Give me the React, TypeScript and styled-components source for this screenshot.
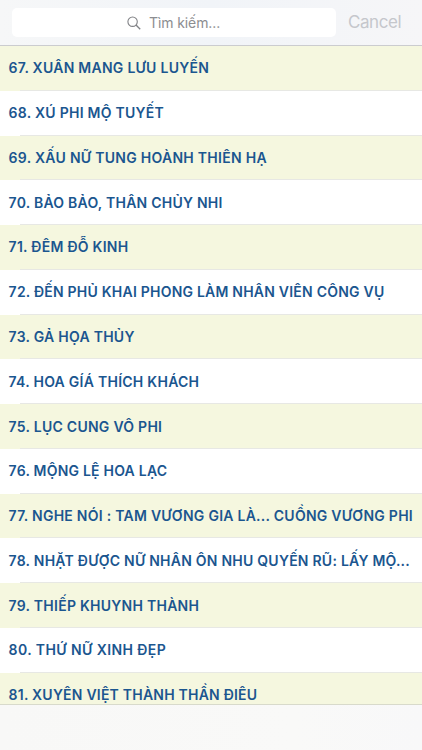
import React from "react";
import styled, { createGlobalStyle } from "styled-components";

const GlobalStyle = createGlobalStyle`
  * { box-sizing: border-box; }
  body { margin: 0; background: #fff; }
`;

const Screen = styled.div`
  width: 422px;
  height: 750px;
  display: flex;
  flex-direction: column;
  overflow: hidden;
  font-family: Inter, "Liberation Sans", sans-serif;
`;

const SearchBar = styled.header`
  flex: none;
  height: 46px;
  padding: 8px 0 0 12px;
  display: flex;
  align-items: flex-start;
  background: linear-gradient(90deg, #f6f7f8 0%, #f1f4f8 50%, #f6f6f8 100%);
  border-bottom: 1px solid #cbcccf;
`;

const SearchField = styled.div`
  width: 324px;
  height: 29px;
  padding: 0 0 0 115px;
  display: flex;
  align-items: center;
  gap: 8px;
  border-radius: 5px;
  background: #fff;
  color: #8c8d91;
  font-size: 14px;
  letter-spacing: -0.1px;
  white-space: nowrap;
`;

const CancelButton = styled.button`
  height: 29px;
  margin-left: 12px;
  padding: 0 0 1px;
  border: 0;
  background: none;
  color: #c5c7cc;
  font: 400 17px Inter, sans-serif;
  letter-spacing: -0.45px;
`;

const List = styled.main`
  flex: 1;
  min-height: 0;
  overflow: hidden;
`;

const Row = styled.div<{ $tinted: boolean }>`
  height: 44.77px;
  padding-left: 8.6px;
  display: flex;
  align-items: center;
  color: #1b568f;
  background:
    linear-gradient(#e7e8e4, #e7e8e4) 20px 100% / 100% 1px no-repeat,
    ${(p) => (p.$tinted ? "#f5f7df" : "#fff")};
`;

const Title = styled.span<{ $tracking?: number }>`
  font-size: 14px;
  font-weight: 640;
  line-height: 20px;
  white-space: nowrap;
  letter-spacing: ${(p) => p.$tracking ?? 0.26}px;
`;

const BottomBar = styled.footer`
  flex: none;
  height: 46px;
  background: linear-gradient(90deg, #f8f8f7, #f9f9f8 70%, #f8f8f9);
  border-top: 1px solid #d8dacb;
`;

const stories: { id: number; name: string; tracking?: number }[] = [
  { id: 67, name: "XUÂN MANG LƯU LUYẾN" },
  { id: 68, name: "XÚ PHI MỘ TUYẾT" },
  { id: 69, name: "XẤU NỮ TUNG HOÀNH THIÊN HẠ", tracking: 0.28 },
  { id: 70, name: "BẢO BẢO, THÂN CHỦY NHI", tracking: 0.24 },
  { id: 71, name: "ĐÊM ĐỖ KINH" },
  { id: 72, name: "ĐẾN PHỦ KHAI PHONG LÀM NHÂN VIÊN CÔNG VỤ", tracking: 0.22 },
  { id: 73, name: "GẢ HỌA THỦY", tracking: 0.25 },
  { id: 74, name: "HOA GÍÁ THÍCH KHÁCH" },
  { id: 75, name: "LỤC CUNG VÔ PHI" },
  { id: 76, name: "MỘNG LỆ HOA LẠC", tracking: 0.22 },
  { id: 77, name: "NGHE NÓI : TAM VƯƠNG GIA LÀ... CUỒNG VƯƠNG PHI", tracking: 0.26 },
  { id: 78, name: "NHẶT ĐƯỢC NỮ NHÂN ÔN NHU QUYẾN RŨ: LẤY MỘ...", tracking: 0.24 },
  { id: 79, name: "THIẾP KHUYNH THÀNH" },
  { id: 80, name: "THỨ NỮ XINH ĐẸP", tracking: 0.42 },
  { id: 81, name: "XUYÊN VIỆT THÀNH THẦN ĐIÊU", tracking: 0.22 },
];

const SearchIcon = () => (
  <svg width="14" height="14" viewBox="0 0 14 14" fill="none" stroke="#818286" strokeWidth="1.1">
    <circle cx="5.6" cy="5.7" r="4.7" />
    <path d="M9 9.1 13.2 13.2" strokeWidth="1.4" />
  </svg>
);

export default function App() {
  return (
    <>
      <GlobalStyle />
      <Screen>
        <SearchBar>
          <SearchField>
            <SearchIcon />
            <span>Tìm kiếm...</span>
          </SearchField>
          <CancelButton>Cancel</CancelButton>
        </SearchBar>
        <List>
          {stories.map((s) => (
            <Row key={s.id} $tinted={s.id % 2 === 1}>
              <Title $tracking={s.tracking}>{`${s.id}. ${s.name}`}</Title>
            </Row>
          ))}
        </List>
        <BottomBar />
      </Screen>
    </>
  );
}
